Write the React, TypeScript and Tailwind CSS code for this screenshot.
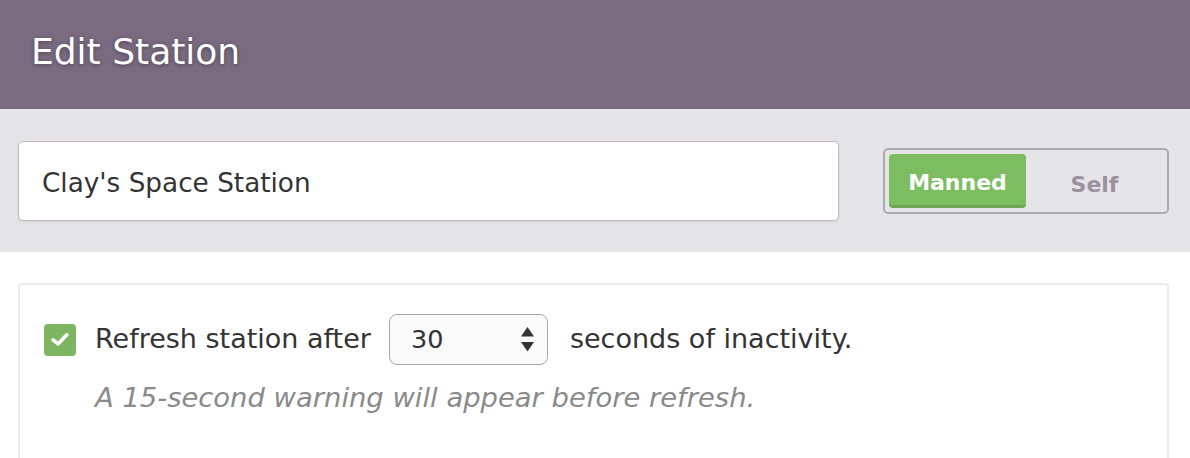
import React from "react";

export default function App() {
  return (
    <div className="w-[1190px] h-[458px] overflow-hidden bg-white font-['DejaVu_Sans',sans-serif]">
      {/* Header */}
      <div className="h-[109px] bg-[#7a6b80] flex items-center pl-[31px] pb-[6px]">
        <h1 className="text-[36px] text-white font-normal [text-shadow:0_1px_4px_rgba(0,0,0,0.35)]">
          Edit Station
        </h1>
      </div>

      {/* Name band */}
      <div className="h-[143px] bg-[#e5e5e7] flex items-center pl-[18px] pr-[21px] gap-[44px]">
        <div className="flex-1 h-[80px] bg-white border border-[#c7b4cc] rounded-[5px] shadow-[0_1px_3px_rgba(0,0,0,0.08)] flex items-center pl-[23px] pt-[6px] text-[26.3px] text-[#333]">
          Clay's Space Station
        </div>
        <div className="w-[286px] h-[66px] border-2 border-[#acacac] rounded-[5px] p-[4px] flex">
          <div className="flex-1 bg-[#7dbd62] rounded-[4px] border-b-[3px] border-[#6fa655] flex items-center justify-center pt-[7px] text-white font-bold text-[22px]">
            Manned
          </div>
          <div className="flex-1 flex items-center justify-center pt-[7px] text-[#9b909f] font-bold text-[22px]">
            Self
          </div>
        </div>
      </div>

      {/* Settings card */}
      <div className="pt-[31px] pl-[18px] pr-[21px]">
        <div className="h-[200px] border-2 border-b-0 border-[#ececec] rounded-t-[4px] pl-[24px] pt-[29px]">
          <div className="flex items-center h-[51px] text-[27px] text-[#333]">
            <div className="w-[32px] h-[32px] rounded-[4px] bg-[#7db563] flex items-center justify-center mr-[19px]">
              <svg width="18" height="15" viewBox="0 0 18 15">
                <polyline
                  points="2.2,7.8 7,12 15.8,2.8"
                  fill="none"
                  stroke="white"
                  strokeWidth="3.6"
                  strokeLinecap="round"
                  strokeLinejoin="round"
                />
              </svg>
            </div>
            <span>Refresh station after</span>
            <div className="ml-[18px] mr-[22px] w-[159px] h-[51px] border border-[#a9a9a9] rounded-[8px] bg-[#fafafa] flex items-center justify-between pl-[21px] pr-[13px]">
              <span className="text-[25.5px]">30</span>
              <svg width="13" height="25" viewBox="0 0 13 25">
                <polygon points="6.5,0 13,9.5 0,9.5" fill="#333" />
                <polygon points="0,15 13,15 6.5,24.5" fill="#333" />
              </svg>
            </div>
            <span>seconds of inactivity.</span>
          </div>
          <div className="mt-[17px] pl-[51px] text-[27.4px] leading-[32px] italic text-[#8a8a8a]">
            A 15-second warning will appear before refresh.
          </div>
        </div>
      </div>
    </div>
  );
}
